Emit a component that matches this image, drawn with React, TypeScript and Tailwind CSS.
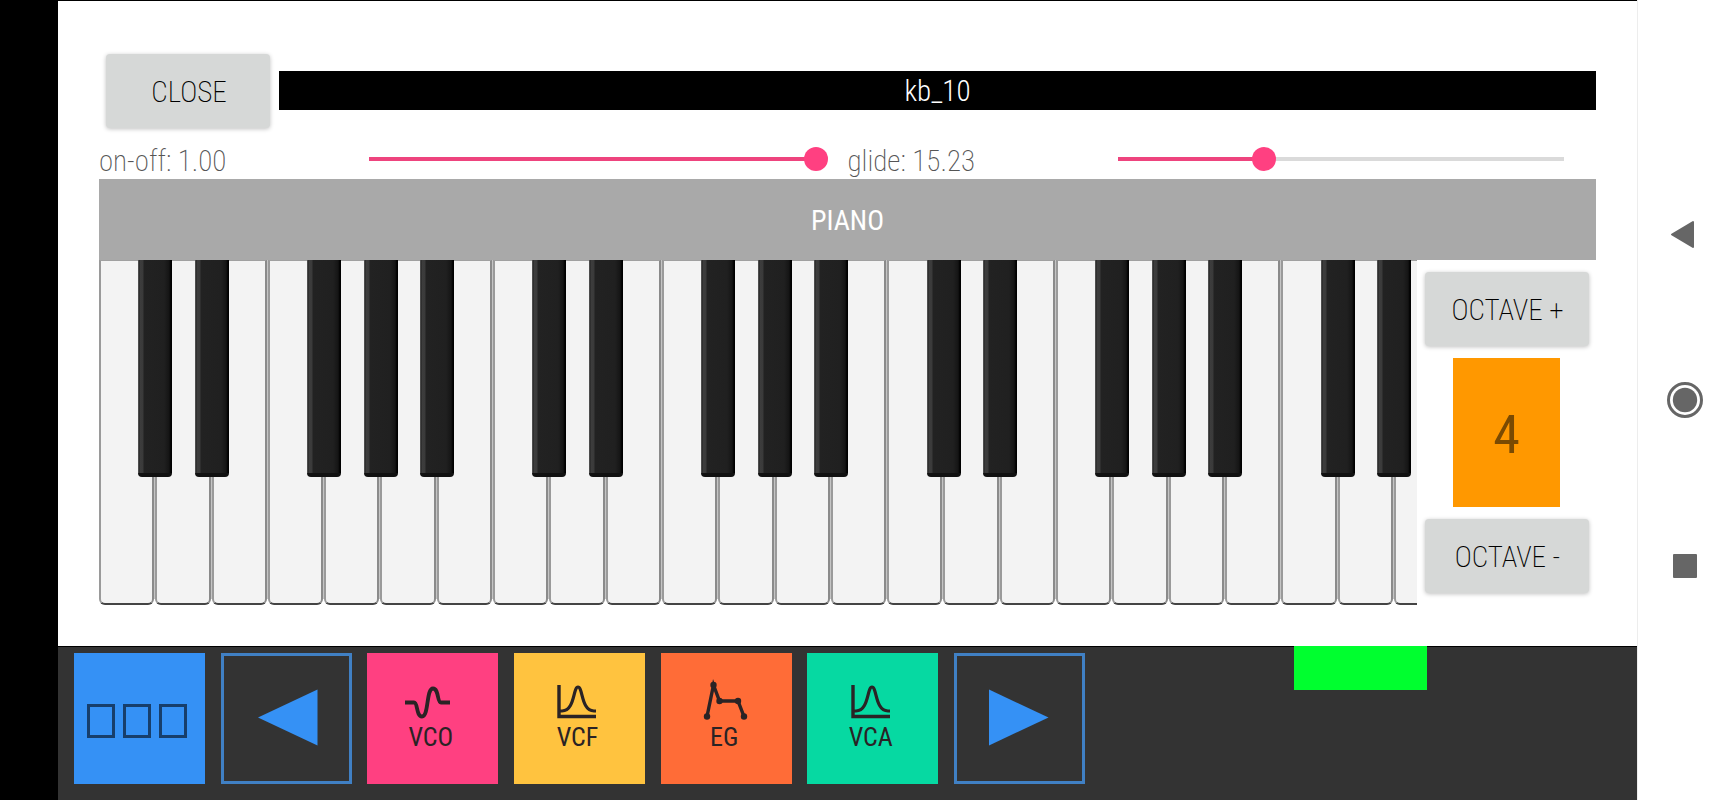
//Hooks
import { useState } from "react"

//Types
import type { CSSProperties, ReactNode } from "react"


// 23 full keys and a bit of the next one are visible
const KEY_WIDTH = 100 / 23.41
const WHITE_KEYS = Array.from({ length: 24 }, (_, i) => i)
// the lowest key is a C, there is no black key after E and B
const BLACK_KEYS = WHITE_KEYS.filter((i) => i < 23 && i % 7 != 2 && i % 7 != 6)


function AndroidButton({ children, onClick }: { children: ReactNode, onClick?: () => void }) {
    return (
        <button onClick={onClick} className="w-[164px] h-[74px] shrink-0 pt-0.5 pl-0.5 rounded-sm bg-[#d6d8d7] text-[29px] leading-8 font-extralight text-black shadow-[0_1px_4px_rgba(0,0,0,0.25)]">
            {children}
        </button>
    )
}


function Param({ name, max, initial }: { name: string, max: number, initial: number }) {

    const [value, setValue] = useState(initial)

    return (
        <div className="flex-1 flex items-center h-[38px] pr-5">
            <label htmlFor={name} className="w-[258px] shrink-0 pt-1 text-[29px] leading-8 font-extralight text-[#555]">
                {name}: {value.toFixed(2)}
            </label>
            <input
                id={name}
                type="range"
                min={0}
                max={max}
                step={0.01}
                value={value}
                onChange={(e) => setValue(Number(e.target.value))}
                style={{ "--fill": (value / max) * 100 + "%" } as CSSProperties}
                className="flex-1 min-w-0 h-6 appearance-none bg-[linear-gradient(to_right,#ee447e_var(--fill),#dadada_var(--fill))] bg-[length:calc(100%-24px)_4px] bg-center bg-no-repeat [&::-webkit-slider-thumb]:appearance-none [&::-webkit-slider-thumb]:size-6 [&::-webkit-slider-thumb]:rounded-full [&::-webkit-slider-thumb]:bg-[#ff4081]"
            />
        </div>
    )
}


function Piano() {
    return (
        <div className="relative flex-1 min-w-0 flex overflow-hidden">
            {WHITE_KEYS.map((i) => (
                <button key={i} aria-label={"White key " + (i + 1)} className="shrink-0 pr-px bg-[linear-gradient(#c4c4c4,#c4c4c4)] bg-[length:100%_calc(100%-6px)] bg-no-repeat" style={{ width: KEY_WIDTH + "%" }}>
                    <span className="block h-full rounded-b-md border-t border-l-2 border-r-2 border-b-2 border-t-[#a0a0a0] border-l-[#9a9a9a] border-r-[#8a8a8a] border-b-[#444] bg-[#f3f3f3]"></span>
                </button>
            ))}
            {BLACK_KEYS.map((i) => (
                <button
                    key={i}
                    aria-label={"Black key " + (i + 1)}
                    className="absolute top-0 w-[34px] h-[63%] -translate-x-1/2 rounded-b-sm border-b-4 border-[#111] bg-[linear-gradient(to_right,#777_0px,#222_1px,#3d3d3d_2px,#3a3a3a_5px,#222_6px,#202020_26px,#151515_31px,#000_33px)]"
                    style={{ left: (i + 1) * KEY_WIDTH + "%" }}
                ></button>
            ))}
        </div>
    )
}


function ModuleButton({ label, color, children }: { label: string, color: string, children: ReactNode }) {
    return (
        <button className={"size-[131px] shrink-0 pt-7 pr-1 flex flex-col items-center text-[#2a2325] " + color}>
            <svg className="shrink-0 overflow-visible" width="48" height="40" viewBox="40 28 48 40" fill="none" stroke="currentColor" strokeWidth="3.4">
                {children}
            </svg>
            <span className="text-[26px] leading-8 font-normal">{label}</span>
        </button>
    )
}

function CurveIcon() {
    return (
        <>
            <path d="M46 32V63.5H83" />
            <path d="M47 58H49C62 58 60 34 65 34S68 58 81 58H83" strokeWidth="3.2" />
        </>
    )
}


function App() {

    const [octave, setOctave] = useState(4)

    return (
        <div className="min-h-screen flex bg-black font-['Roboto_Condensed','Liberation_Sans_Narrow',Roboto,sans-serif]">
            <div className="w-[58px] shrink-0"></div>

            <div className="flex-1 min-w-0 flex flex-col pt-px">
                <main className="flex-1 flex flex-col bg-white px-[41px] pb-[41px]">
                    <div className="flex items-center gap-[9px] pl-[7px] pt-[53px]">
                        <AndroidButton>CLOSE</AndroidButton>
                        <h1 className="flex-1 mb-px pt-0.5 bg-black text-center text-[29px] leading-[37px] font-light text-white">kb_10</h1>
                    </div>

                    <div className="flex pt-3">
                        <Param name="on-off" max={1} initial={1} />
                        <Param name="glide" max={46.57} initial={15.23} />
                    </div>

                    <h2 className="mt-px h-[81px] pt-0.5 flex items-center justify-center bg-[#a9a9a9] text-[28px] leading-8 font-normal text-white">PIANO</h2>

                    <div className="flex-1 flex">
                        <Piano />
                        <div className="w-[179px] shrink-0 flex flex-col items-center pt-3 gap-3">
                            <AndroidButton onClick={() => setOctave(octave + 1)}>OCTAVE +</AndroidButton>
                            <output className="w-[107px] h-[149px] pt-1 flex items-center justify-center bg-[#ff9800] text-[54px] font-normal text-[#7a4a02]">{octave}</output>
                            <AndroidButton onClick={() => setOctave(octave - 1)}>OCTAVE -</AndroidButton>
                        </div>
                    </div>
                </main>

                <footer className="h-[154px] flex items-start bg-[#333] pl-4 shadow-[inset_0_1px_0_0_#000]">
                    <div className="w-[1011px] shrink-0 mt-[7px] flex justify-between">
                        <button aria-label="Modules" className="size-[131px] bg-[#3591f5]">
                            <svg viewBox="0 0 131 131" fill="none" stroke="#173e6b" strokeWidth="3">
                                <rect x="14.5" y="52.5" width="25" height="31" />
                                <rect x="50.5" y="52.5" width="25" height="31" />
                                <rect x="86.5" y="52.5" width="25" height="31" />
                            </svg>
                        </button>
                        <button aria-label="Previous" className="size-[131px] shadow-[inset_0_0_0_3px_#4080c4]">
                            <svg viewBox="0 0 131 131" fill="#3591f5"><path d="M37 64.5L96.5 36.5V92.5Z" /></svg>
                        </button>
                        <ModuleButton label="VCO" color="bg-[#ff4081]">
                            <path d="M38 49.5H47C51 49.5 49 63.5 55 63.5C62 63.5 59 35.5 66 35.5C72 35.5 70 49.5 74 49.5H83" strokeWidth="3.8" />
                        </ModuleButton>
                        <ModuleButton label="VCF" color="bg-[#ffc33f]"><CurveIcon /></ModuleButton>
                        <ModuleButton label="EG" color="bg-[#ff6c37]">
                            <path d="M47 63.5L53.5 32L59.5 48H78L84 63.5" />
                            <g fill="currentColor" stroke="none">
                                <circle cx="47" cy="63.5" r="3.2" />
                                <circle cx="53.5" cy="32" r="3.2" />
                                <circle cx="59.5" cy="48" r="3.2" />
                                <circle cx="78" cy="48" r="3.2" />
                                <circle cx="84" cy="63.5" r="3.2" />
                            </g>
                        </ModuleButton>
                        <ModuleButton label="VCA" color="bg-[#06d9a2]"><CurveIcon /></ModuleButton>
                        <button aria-label="Next" className="size-[131px] shadow-[inset_0_0_0_3px_#4080c4]">
                            <svg viewBox="0 0 131 131" fill="#3591f5"><path d="M94.5 64.5L35 36.5V92.5Z" /></svg>
                        </button>
                    </div>
                    <div className="ml-auto mr-[210px] w-[133px] h-11 bg-[#00ff2f]"></div>
                </footer>
            </div>

            {/* System navigation */}
            <nav className="w-24 shrink-0 pr-0.5 flex flex-col items-center justify-center gap-[130px] border-l border-[#ededed] bg-white text-[#666]">
                <button aria-label="Back" className="size-9">
                    <svg viewBox="0 0 36 36" fill="currentColor" stroke="currentColor" strokeWidth="2" strokeLinejoin="round"><path d="M5 18.5L26 6V31Z" /></svg>
                </button>
                <button aria-label="Home" className="size-9">
                    <svg viewBox="0 0 36 36" fill="currentColor">
                        <circle cx="18" cy="18" r="16.5" fill="none" stroke="currentColor" strokeWidth="3" />
                        <circle cx="18" cy="18" r="12.2" />
                    </svg>
                </button>
                <button aria-label="Recent apps" className="size-9">
                    <svg viewBox="0 0 36 36" fill="currentColor"><rect x="6" y="6" width="24" height="24" rx="1" /></svg>
                </button>
            </nav>
        </div>
    )
}

export default App
